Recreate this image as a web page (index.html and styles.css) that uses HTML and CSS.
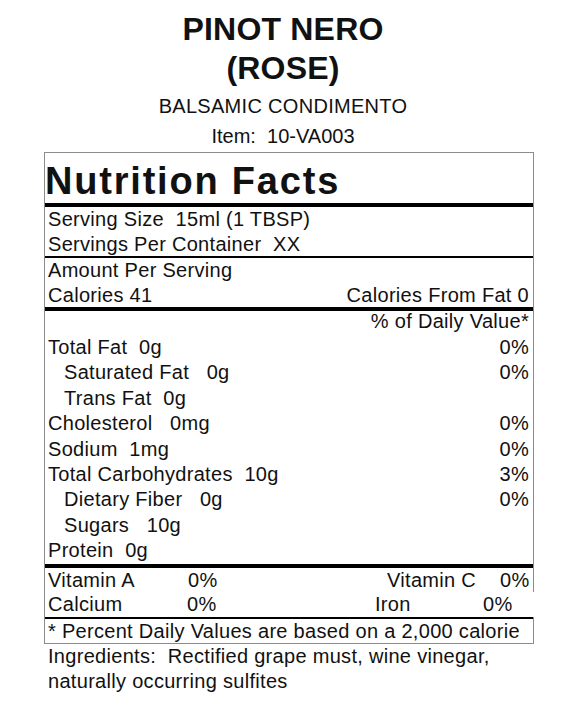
FILE: index.html
```html
<!DOCTYPE html>
<html lang="en">
  <head>
    <meta charset="UTF-8">
    <meta name="viewport" content="width=device-width, initial-scale=1.0">
    <title>Pinot Nero (Rose) - Nutrition Facts</title>
    <link rel="stylesheet" href="styles.css">
  </head>
  <body>
    <header class="product">
      <h1>PINOT NERO<br>(ROSE)</h1>
      <div class="kind">BALSAMIC CONDIMENTO</div>
      <div class="item">Item:  10-VA003</div>
    </header>

    <section class="facts">
      <div class="facts-title">Nutrition Facts</div>

      <div class="serving">
        <div class="row"><span>Serving Size  15ml (1 TBSP)</span></div>
        <div class="row"><span>Servings Per Container  XX</span></div>
      </div>

      <div class="amount">
        <div class="row"><span>Amount Per Serving</span></div>
        <div class="row"><span>Calories 41</span><span>Calories From Fat 0</span></div>
      </div>

      <div class="daily">
        <div class="row dv-head"><span>% of Daily Value*</span></div>
        <div class="row"><span>Total Fat  0g</span><span>0%</span></div>
        <div class="row sub"><span>Saturated Fat   0g</span><span>0%</span></div>
        <div class="row sub"><span>Trans Fat  0g</span></div>
        <div class="row"><span>Cholesterol   0mg</span><span>0%</span></div>
        <div class="row"><span>Sodium  1mg</span><span>0%</span></div>
        <div class="row"><span>Total Carbohydrates  10g</span><span>3%</span></div>
        <div class="row sub"><span>Dietary Fiber   0g</span><span>0%</span></div>
        <div class="row sub"><span>Sugars   10g</span></div>
        <div class="row"><span>Protein  0g</span></div>
      </div>

      <div class="vitamins">
        <div class="vit vit-a">
          <span>Vitamin A</span><span>0%</span><span>Vitamin C</span><span>0%</span>
        </div>
        <div class="vit vit-b">
          <span>Calcium</span><span>0%</span><span>Iron</span><span>0%</span>
        </div>
      </div>

      <div class="footnote">* Percent Daily Values are based on a 2,000 calorie</div>
    </section>

    <p class="ingredients">Ingredients:  Rectified grape must, wine vinegar, naturally occurring sulfites</p>
  </body>
</html>
```

FILE: styles.css
```css
body {
  margin: 0;
  font-family: 'Liberation Sans', Arial, sans-serif;
  color: #111;
  letter-spacing: 0.3px;
  background: #fff;
}

.product {
  width: 566px;
  padding-top: 10px;
  text-align: center;
}

h1 {
  margin: 0;
  font-size: 32px;
  line-height: 39px;
  letter-spacing: 0.2px;
}

.kind {
  margin-top: 3px;
  font-size: 20px;
  line-height: 30px;
}

.item {
  font-size: 20px;
  line-height: 30px;
  white-space: pre;
  letter-spacing: 0;
}

.facts {
  width: 490px;
  box-sizing: border-box;
  margin: 1px 0 0 44px;
  border: 1px solid #8c8c8c;
  font-size: 20px;
}

.facts-title {
  height: 50px;
  box-sizing: border-box;
  padding-top: 6px;
  font-size: 38px;
  font-weight: bold;
  line-height: 44px;
  letter-spacing: 1.8px;
}

.row {
  display: flex;
  justify-content: space-between;
  padding: 0 4px 0 3px;
  white-space: pre;
  line-height: 25.4px;
}

.sub {
  padding-left: 19px;
}

.serving {
  border-top: 4px solid #000;
}

.serving .row,
.amount .row {
  line-height: 24.5px;
}

.amount {
  border-top: 2px solid #000;
}

.daily {
  border-top: 4px solid #000;
}

.dv-head {
  justify-content: flex-end;
  line-height: 20px;
  margin-bottom: 4px;
}

.vitamins {
  border-top: 4px solid #000;
}

.vit {
  display: grid;
  padding-left: 3px;
  white-space: pre;
}

.vit-a {
  grid-template-columns: 140px 199px 113px auto;
  line-height: 24px;
}

/* this row runs past the right edge of the box in the original */
.vit-b {
  grid-template-columns: 139px 188px 108px auto;
  line-height: 25.4px;
  margin-right: -1px;
  background: #fff;
}

.footnote {
  border-top: 2px solid #000;
  padding-left: 3px;
  line-height: 24px;
  white-space: nowrap;
}

.ingredients {
  width: 486px;
  margin: 0 0 0 48px;
  font-size: 20px;
  line-height: 25px;
  white-space: pre-wrap;
}
```
